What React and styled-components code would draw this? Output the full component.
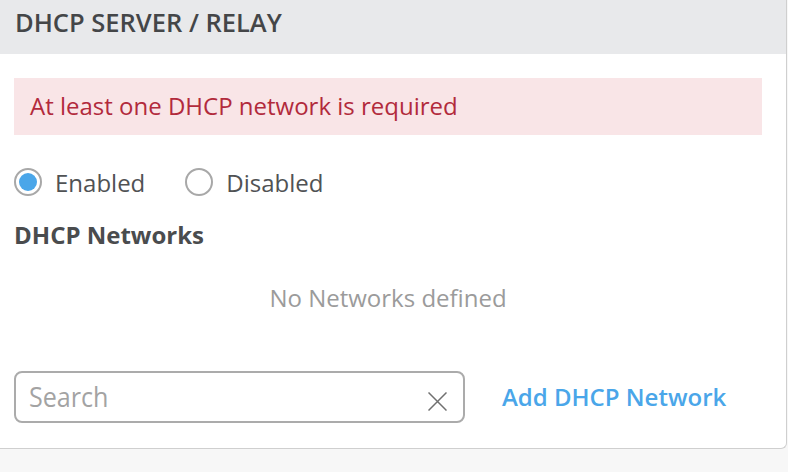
import styled, { createGlobalStyle } from "styled-components";

const GlobalStyle = createGlobalStyle`
  html, body {
    margin: 0;
    padding: 0;
    background: #f7f7f7;
    font-family: "Open Sans", "Liberation Sans", sans-serif;
  }
`;

const Panel = styled.section`
  width: 786px;
  height: 448px;
  background: #ffffff;
  border-right: 1.5px solid #cfcfcf;
  border-bottom: 1.5px solid #cfcfcf;
  border-bottom-right-radius: 6px;
  box-sizing: content-box;
  display: flex;
  flex-direction: column;
`;

const Header = styled.header`
  height: 54px;
  box-sizing: border-box;
  background: #e8e9eb;
  padding: 5px 0 0 15px;
`;

const Title = styled.h2`
  margin: 0;
  font-size: 25.5px;
  font-weight: 600;
  line-height: normal;
  color: #444648;
`;

const Body = styled.div`
  padding: 24px 24px 0 14px;
  display: flex;
  flex-direction: column;
`;

const Alert = styled.div`
  height: 57px;
  background: #f9e5e7;
  color: #b22a3c;
  font-size: 24px;
  display: flex;
  align-items: center;
  padding: 0 0 2px 16px;
  box-sizing: border-box;
`;

const RadioRow = styled.div`
  display: flex;
  align-items: center;
  margin-top: 33px;
  height: 28px;
`;

const RadioLabel = styled.label`
  display: flex;
  align-items: center;
  gap: 13px;
  font-size: 24px;
  color: #505254;
  margin-right: 40px;
  cursor: pointer;
`;

const RadioCircle = styled.span`
  width: 24px;
  height: 24px;
  border-radius: 50%;
  border: 2px solid #a8a8a8;
  display: flex;
  align-items: center;
  justify-content: center;
  &::after {
    content: "";
    width: 18px;
    height: 18px;
    border-radius: 50%;
    background: ${({ checked }) => (checked ? "#4aa6e9" : "transparent")};
  }
`;

const SectionTitle = styled.h3`
  margin: 21.5px 0 0;
  font-size: 24px;
  font-weight: 700;
  color: #4a4c4e;
  line-height: normal;
`;

const Empty = styled.p`
  margin: 30px 0 0;
  text-align: center;
  font-size: 24px;
  color: #9b9b9b;
  line-height: normal;
`;

const Toolbar = styled.div`
  display: flex;
  align-items: center;
  gap: 37px;
  margin-top: 57px;
`;

const SearchBox = styled.div`
  width: 451px;
  height: 52px;
  box-sizing: border-box;
  border: 2px solid #ababab;
  border-radius: 8px;
  display: flex;
  align-items: center;
  padding: 0 16px 0 13px;
`;

const SearchInput = styled.input`
  flex: 1;
  min-width: 0;
  border: none;
  outline: none;
  background: transparent;
  font-family: "Open Sans", "Liberation Sans", sans-serif;
  font-size: 27px;
  color: #444;
  padding: 0;
  transform: scaleX(0.93);
  transform-origin: left center;
  &::placeholder {
    color: #a3a3a3;
  }
`;

const ClearButton = styled.button`
  border: none;
  background: none;
  padding: 0;
  display: flex;
  cursor: pointer;
  margin-top: 9px;
`;

const AddLink = styled.a`
  color: #4aa6e9;
  font-size: 24px;
  font-weight: 600;
  text-decoration: none;
  cursor: pointer;
`;

export default function App() {
  return (
    <>
      <GlobalStyle />
      <Panel>
        <Header>
          <Title>DHCP SERVER / RELAY</Title>
        </Header>
        <Body>
          <Alert>At least one DHCP network is required</Alert>
          <RadioRow>
            <RadioLabel>
              <RadioCircle checked />
              Enabled
            </RadioLabel>
            <RadioLabel>
              <RadioCircle />
              Disabled
            </RadioLabel>
          </RadioRow>
          <SectionTitle>DHCP Networks</SectionTitle>
          <Empty>No Networks defined</Empty>
          <Toolbar>
            <SearchBox>
              <SearchInput placeholder="Search" />
              <ClearButton aria-label="Clear">
                <svg width="19" height="19" viewBox="0 0 19 19">
                  <path d="M0.5 0.5 L18.5 18.5 M18.5 0.5 L0.5 18.5" stroke="#707070" strokeWidth="1.5" fill="none" />
                </svg>
              </ClearButton>
            </SearchBox>
            <AddLink>Add DHCP Network</AddLink>
          </Toolbar>
        </Body>
      </Panel>
    </>
  );
}
